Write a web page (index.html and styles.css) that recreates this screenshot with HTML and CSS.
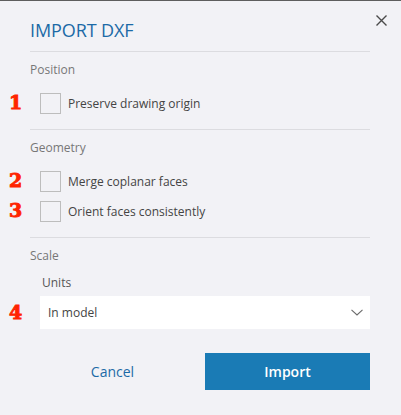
FILE: index.html
```html
<!DOCTYPE html>
<html lang="en">
<head>
<meta charset="utf-8">
<title>Import DXF</title>
<link rel="stylesheet" href="styles.css">
</head>
<body>
<div class="dialog">
  <header class="dialog-header">
    <h1 class="title">IMPORT DXF</h1>
    <button class="close" aria-label="Close">
      <svg width="11" height="11" viewBox="0 0 11 11"><path d="M0.5 0.5L10.5 10.5M10.5 0.5L0.5 10.5" stroke="#4a4a4a" stroke-width="1.4" fill="none"/></svg>
    </button>
  </header>

  <section class="section">
    <div class="section-title">Position</div>
    <label class="check-row"><span class="marker">1</span><span class="box"></span><span class="check-label">Preserve drawing origin</span></label>
  </section>

  <section class="section">
    <div class="section-title">Geometry</div>
    <div class="rows">
      <label class="check-row"><span class="marker">2</span><span class="box"></span><span class="check-label">Merge coplanar faces</span></label>
      <label class="check-row"><span class="marker">3</span><span class="box"></span><span class="check-label">Orient faces consistently</span></label>
    </div>
  </section>

  <section class="section">
    <div class="section-title">Scale</div>
    <div class="field-label">Units</div>
    <div class="select-row">
      <span class="marker">4</span>
      <div class="select">
        <span>In model</span>
        <svg width="12" height="7" viewBox="0 0 12 7"><path d="M0.5 0.8L6 6L11.5 0.8" stroke="#6a6a6a" stroke-width="1.1" fill="none"/></svg>
      </div>
    </div>
  </section>

  <footer class="actions">
    <button class="btn-cancel">Cancel</button>
    <button class="btn-import">Import</button>
  </footer>
</div>
</body>
</html>
```

FILE: styles.css
```css
html, body {
  margin: 0;
  padding: 0;
}
body {
  background: #f2f2f6;
  border-top: 1px solid #5e5e5e;
  font-family: "Open Sans", "Liberation Sans", sans-serif;
  color: #454545;
  height: 414px;
}
.dialog {
  padding: 0 31px 0 30px;
  position: relative;
}
.dialog-header {
  border-bottom: 1px solid #dcdce0;
  height: 50px;
}
.title {
  margin: 0;
  padding-top: 18px;
  font-size: 18px;
  line-height: 22px;
  font-weight: 400;
  color: #1c6aa6;
  letter-spacing: -0.1px;
}
.close {
  position: absolute;
  top: 14px;
  right: 14px;
  width: 11px;
  height: 11px;
  padding: 0;
  border: 0;
  background: none;
  display: block;
}
.close svg { display: block; }
.section {
  border-bottom: 1px solid #dcdce0;
  padding-bottom: 15px;
}
.section:nth-of-type(3) {
  border-bottom: 0;
  padding-bottom: 0;
}
.section-title {
  margin-top: 10px;
  font-size: 12px;
  line-height: 16px;
  color: #777;
  margin-bottom: 15px;
}
.rows {
  display: flex;
  flex-direction: column;
  gap: 9px;
}
.check-row {
  display: flex;
  align-items: center;
  gap: 7px;
  padding-left: 10px;
  height: 21px;
  position: relative;
}
.box {
  width: 19px;
  height: 19px;
  border: 1px solid #bdbdbd;
  flex: none;
}
.check-label {
  font-size: 12px;
  color: #444;
}
.marker {
  position: absolute;
  left: -21px;
  top: -1px;
  font-family: "DejaVu Serif", serif;
  font-weight: 700;
  font-size: 19px;
  line-height: 21px;
  color: #ff2400;
  -webkit-text-stroke: 0.9px #ff2400;
}
.field-label {
  margin-top: -4px;
  padding-left: 12px;
  font-size: 12px;
  line-height: 16px;
  color: #555;
  margin-bottom: 5px;
}
.select-row {
  position: relative;
  padding-left: 10px;
}
.select-row .marker {
  top: 6px;
}
.select {
  height: 33px;
  background: #fff;
  display: flex;
  align-items: center;
  justify-content: space-between;
  padding: 0 7px 0 8px;
  font-size: 12px;
  color: #444;
}
.select svg { display: block; }
.actions {
  display: flex;
  justify-content: space-between;
  align-items: center;
  margin-top: 24px;
  padding-left: 10px;
}
.btn-cancel {
  border: 0;
  background: none;
  font-family: inherit;
  font-size: 14px;
  color: #1c6aa6;
  width: 145px;
  height: 37px;
  padding: 0;
}
.btn-import {
  border: 0;
  background: #1a7bb5;
  color: #fff;
  font-family: inherit;
  font-size: 14px;
  font-weight: 600;
  width: 165px;
  height: 37px;
  padding: 0;
}
```
